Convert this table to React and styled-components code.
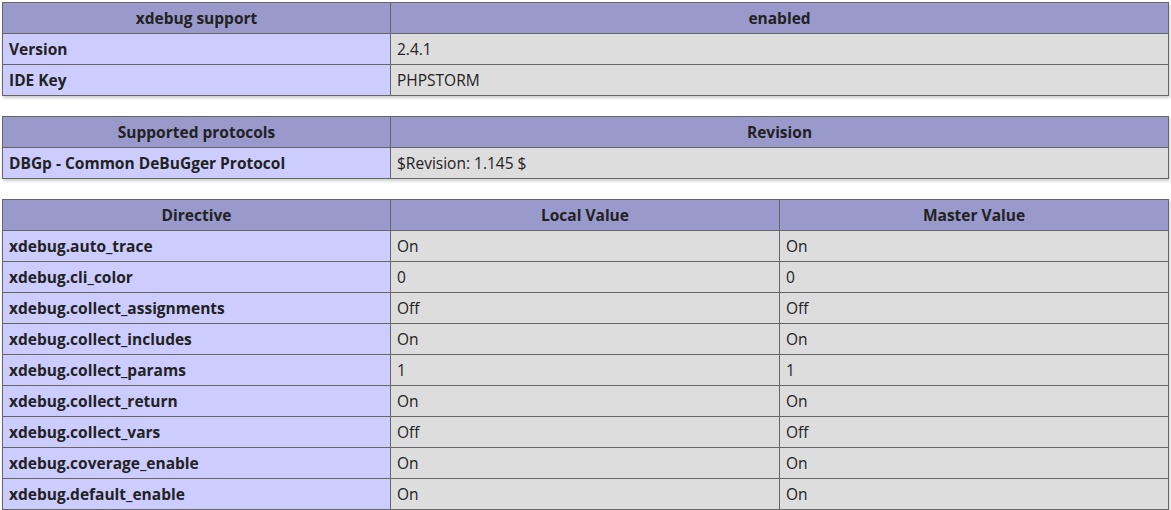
import React from 'react';
import styled, { createGlobalStyle } from 'styled-components';

const GlobalStyle = createGlobalStyle`
  body {
    margin: 0;
    padding: 2px 3px 0 2px;
    background: #fff;
    color: #222;
    font-family: "Open Sans", "Noto Sans", "Liberation Sans", sans-serif;
  }
`;

const Table = styled.table`
  width: 1167px;
  border-collapse: collapse;
  box-shadow: 1px 2px 3px #ccc;
  margin-bottom: 20px;
  table-layout: fixed;
  font-size: 15.5px;
`;

const Cell = styled.td`
  border: 1px solid #666;
  height: 31px;
  box-sizing: border-box;
  padding: 0 6px;
  vertical-align: middle;
  white-space: nowrap;
  overflow: hidden;
`;

const Head = styled(Cell).attrs({ as: 'th' })`
  background: #99c;
  font-weight: 700;
  text-align: center;
`;

const Key = styled(Cell)`
  background: #ccf;
  font-weight: 700;
`;

const Val = styled(Cell)`
  background: #ddd;
`;

const InfoTable = ({ head, rows, cols }) => (
  <Table>
    <colgroup>
      {cols.map((w, i) => (
        <col key={i} style={{ width: w }} />
      ))}
    </colgroup>
    <thead>
      <tr>
        {head.map((h) => (
          <Head key={h}>{h}</Head>
        ))}
      </tr>
    </thead>
    <tbody>
      {rows.map(([k, ...vals]) => (
        <tr key={k}>
          <Key>{k}</Key>
          {vals.map((v, i) => (
            <Val key={i}>{v}</Val>
          ))}
        </tr>
      ))}
    </tbody>
  </Table>
);

const directives = [
  ['xdebug.auto_trace', 'On', 'On'],
  ['xdebug.cli_color', '0', '0'],
  ['xdebug.collect_assignments', 'Off', 'Off'],
  ['xdebug.collect_includes', 'On', 'On'],
  ['xdebug.collect_params', '1', '1'],
  ['xdebug.collect_return', 'On', 'On'],
  ['xdebug.collect_vars', 'Off', 'Off'],
  ['xdebug.coverage_enable', 'On', 'On'],
  ['xdebug.default_enable', 'On', 'On'],
];

export default function App() {
  return (
    <>
      <GlobalStyle />
      <InfoTable
        cols={[388, 778]}
        head={['xdebug support', 'enabled']}
        rows={[
          ['Version', '2.4.1'],
          ['IDE Key', 'PHPSTORM'],
        ]}
      />
      <InfoTable
        cols={[388, 778]}
        head={['Supported protocols', 'Revision']}
        rows={[['DBGp - Common DeBuGger Protocol', '$Revision: 1.145 $']]}
      />
      <InfoTable
        cols={[388, 389, 389]}
        head={['Directive', 'Local Value', 'Master Value']}
        rows={directives}
      />
    </>
  );
}
